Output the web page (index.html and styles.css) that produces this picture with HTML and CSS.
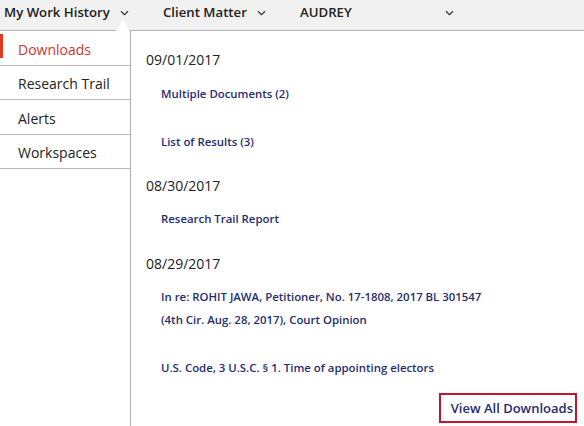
FILE: index.html
```html
<!DOCTYPE html>
<html lang="en">
<head>
<meta charset="utf-8">
<title>My Work History</title>
<link rel="stylesheet" href="styles.css">
</head>
<body>
<header class="topbar">
  <div class="menu menu-history">My Work History
    <svg class="chev" width="9" height="6" viewBox="0 0 9 6"><path d="M1 1.2 L4.5 4.6 L8 1.2" fill="none" stroke="#333" stroke-width="1.2"/></svg>
    <span class="notch"></span>
  </div>
  <div class="menu menu-client">Client Matter
    <svg class="chev" width="9" height="6" viewBox="0 0 9 6"><path d="M1 1.2 L4.5 4.6 L8 1.2" fill="none" stroke="#333" stroke-width="1.2"/></svg>
  </div>
  <div class="menu menu-user">AUDREY
    <svg class="chev" width="9" height="6" viewBox="0 0 9 6"><path d="M1 1.2 L4.5 4.6 L8 1.2" fill="none" stroke="#333" stroke-width="1.2"/></svg>
  </div>
</header>
<div class="main">
  <nav class="sidebar">
    <div class="side-item active">Downloads</div>
    <div class="side-item">Research Trail</div>
    <div class="side-item">Alerts</div>
    <div class="side-item">Workspaces</div>
  </nav>
  <section class="content">
    <div class="date d1">09/01/2017</div>
    <a class="link l1">Multiple Documents (2)</a>
    <a class="link l2">List of Results (3)</a>
    <div class="date d2">08/30/2017</div>
    <a class="link l3">Research Trail Report</a>
    <div class="date d3">08/29/2017</div>
    <a class="link l4">In re: ROHIT JAWA, Petitioner, No. 17-1808, 2017 BL 301547<br>(4th Cir. Aug. 28, 2017), Court Opinion</a>
    <a class="link l5">U.S. Code, 3 U.S.C. § 1. Time of appointing electors</a>
    <div class="actions"><a class="view-all">View All Downloads</a></div>
  </section>
</div>
</body>
</html>
```
FILE: styles.css
```css
* { box-sizing: border-box; }
html, body { margin: 0; padding: 0; background: #fff; }
body {
  width: 584px;
  height: 426px;
  overflow: hidden;
  font-family: "Open Sans", "Liberation Sans", sans-serif;
  color: #222;
}
.topbar {
  height: 31px;
  background: #f1f1f1;
  border-bottom: 1px solid #b4b4b4;
  display: flex;
  align-items: flex-start;
  padding-top: 3px;
  font-size: 13.2px;
  font-weight: 600;
  line-height: 18px;
  color: #222;
  position: relative;
}
.menu { display: flex; align-items: center; position: relative; white-space: nowrap; }
.chev { display: block; margin-top: 2px; }
.menu-history { margin-left: 4px; width: 159px; }
.menu-history .chev { margin-left: 10px; }
.menu-client { width: 137px; }
.menu-client .chev { margin-left: 10px; }
.menu-user .chev { margin-left: 93px; }
.notch {
  position: absolute;
  left: 112px;
  top: 17px;
  width: 0; height: 0;
  border-left: 7px solid transparent;
  border-right: 7px solid transparent;
  border-bottom: 11px solid #fff;
}
.main { display: flex; height: 395px; }
.sidebar {
  width: 131px;
  border-right: 1px solid #ababab;
  flex: none;
}
.side-item {
  height: 34.5px;
  border-bottom: 1px solid #b8b8b8;
  display: flex;
  align-items: center;
  padding-left: 18px;
  padding-top: 3px;
  font-size: 14px;
  color: #222;
  position: relative;
}
.side-item.active { color: #d1342b; }
.side-item.active::before {
  content: "";
  position: absolute;
  left: 0; top: 3px;
  width: 3px; height: 24px;
  background: #e13a22;
}
.content {
  flex: 1;
  display: flex;
  flex-direction: column;
  padding-left: 15px;
  padding-right: 6px;
}
.date { font-size: 14px; line-height: 20px; color: #222; }
.link {
  display: block;
  font-size: 11.4px;
  font-weight: 600;
  line-height: 20px;
  color: #1f2c6e;
  padding-left: 15px;
  text-decoration: none;
}
.d1 { margin-top: 19px; }
.l1 { margin-top: 14px; }
.l2 { margin-top: 28px; }
.d2 { margin-top: 24px; }
.l3 { margin-top: 13px; }
.d3 { margin-top: 25px; }
.l4 { margin-top: 11px; line-height: 23px; }
.l5 { margin-top: 27px; }
.actions { display: flex; justify-content: flex-end; margin-top: 15px; }
.view-all {
  display: block;
  border: 2px solid #c3142c;
  padding: 2px 2px 2px 10px;
  margin-right: 1px;
  font-size: 13px;
  font-weight: 600;
  line-height: 22px;
  color: #1f2c6e;
}
```
